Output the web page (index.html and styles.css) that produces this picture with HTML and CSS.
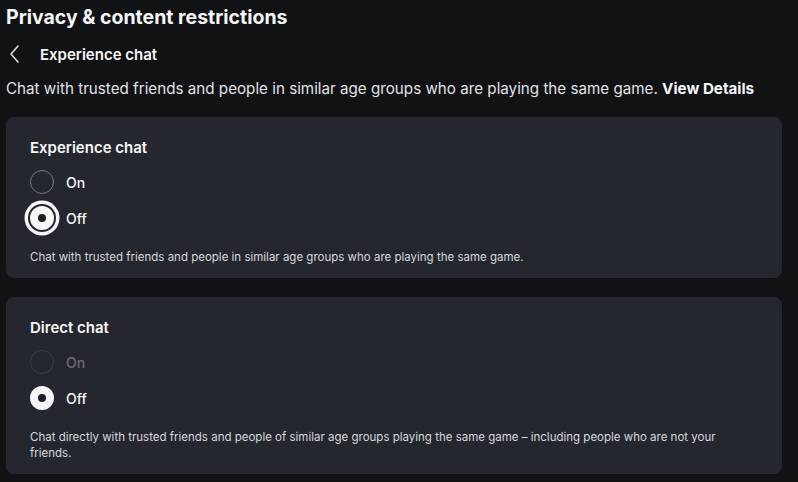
FILE: index.html
```html
<!DOCTYPE html>
<html>
<head>
<meta charset="utf-8">
<link rel="stylesheet" href="styles.css">
</head>
<body>
<div class="page">
  <h1 class="page-title">Privacy &amp; content restrictions</h1>
  <div class="back-row">
    <svg class="back-icon" width="14" height="20" viewBox="0 0 14 20"><path d="M9 2 L2 10 L9 18" fill="none" stroke="#d9dadd" stroke-width="1.6" stroke-linecap="round" stroke-linejoin="round"/></svg>
    <span class="back-title">Experience chat</span>
  </div>
  <p class="intro">Chat with trusted friends and people in similar age groups who are playing the same game. <b>View Details</b></p>

  <section class="card">
    <h2 class="card-title">Experience chat</h2>
    <div class="radio-group">
      <div class="radio-row"><span class="radio"></span><span class="label">On</span></div>
      <div class="radio-row"><span class="radio checked focused"></span><span class="label">Off</span></div>
    </div>
    <p class="card-desc">Chat with trusted friends and people in similar age groups who are playing the same game.</p>
  </section>

  <section class="card">
    <h2 class="card-title">Direct chat</h2>
    <div class="radio-group">
      <div class="radio-row disabled"><span class="radio"></span><span class="label">On</span></div>
      <div class="radio-row"><span class="radio checked"></span><span class="label">Off</span></div>
    </div>
    <p class="card-desc">Chat directly with trusted friends and people of similar age groups playing the same game – including people who are not your friends.</p>
  </section>
</div>
</body>
</html>
```
FILE: styles.css
```css
html, body {
  margin: 0;
  padding: 0;
  background: #111214;
}
body {
  font-family: Inter, "Noto Sans", sans-serif;
  color: #f7f7f8;
}
.page {
  padding: 5px 16px 0 6px;
}
.page-title {
  margin: 0;
  font-size: 19.5px;
  line-height: 25px;
  font-weight: 700;
  color: #f7f7f8;
}
.back-row {
  display: flex;
  align-items: center;
  height: 28px;
  margin-top: 10px;
}
.back-icon {
  margin-left: 3px;
  margin-right: 17px;
}
.back-title {
  font-size: 15px;
  font-weight: 600;
}
.intro {
  margin: 11px 0 0;
  font-size: 15.2px;
  line-height: 20px;
  color: #e1e2e5;
}
.intro b {
  font-weight: 700;
  color: #f7f7f8;
}
.card {
  width: 776px;
  box-sizing: border-box;
  background: #25272e;
  border-radius: 8px;
  padding: 20px 24px 13px;
  margin-top: 18px;
}
.card + .card {
  margin-top: 19px;
}
.card-title {
  margin: 0;
  font-size: 15px;
  line-height: 22px;
  font-weight: 600;
}
.radio-group {
  margin-top: 5px;
}
.radio-row {
  display: flex;
  align-items: center;
  height: 36px;
  gap: 12px;
}
.radio {
  width: 24px;
  height: 24px;
  box-sizing: border-box;
  border-radius: 50%;
  border: 1.5px solid #767880;
  flex: none;
}
.radio.checked {
  border: 8px solid #f7f7f8;
  background: #1f2025;
}
.radio.focused {
  box-shadow: 0 0 0 2px #25272e, 0 0 0 5.5px #f7f7f8;
}
.label {
  font-size: 14px;
  font-weight: 500;
}
.disabled .radio {
  border-color: #3f4147;
}
.disabled .label {
  color: #6b6d73;
}
.card-desc {
  margin: 13px 0 0;
  font-size: 11.5px;
  line-height: 16px;
  color: #d6d8dc;
}
```
